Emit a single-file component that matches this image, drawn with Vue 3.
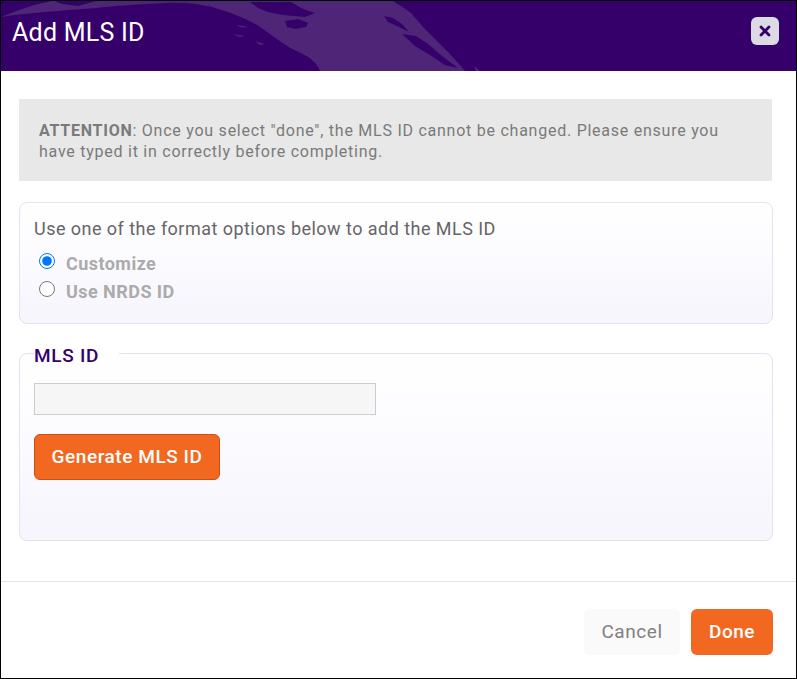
<script setup>
import { ref } from 'vue'
const format = ref('customize')
</script>

<template>
  <div class="modal">
    <header class="head">
      <svg class="globe" viewBox="1 1 795 70" width="795" height="70" aria-hidden="true">
        <path class="land" d="M1 17C14 12 30 5 52 1H55L62 4 78 6 96 1H393L401 6 411 13 424 28 437 41 448 52 458 63 465 71H320C317 63 311 58 301 53 287 47 277 39 263 29 251 20 232 13 212 7 197 3 180 2 165 3 140 4 113 6 96 8 70 10 40 12 15 15Z"/>
        <path class="sea" d="M250 2H291L303 9 315 13 305 17 283 15 268 12 258 8Z"/>
        <path class="sea" d="M285 21 298 19 308 23 306 27 295 29 287 27Z"/>
        <path class="sea" d="M384 16 393 18 402 24 409 32 399 27 388 22Z"/>
        <path class="sea" d="M402 34 416 36 428 44 442 56 458 68 445 65 430 55 415 46Z"/>
        <path class="sea" d="M235 24 255 27 270 36 272 42 258 38 240 32Z"/>
        <path class="land" d="M237 25 244 26 248 28 240 27Z"/>
        <path class="land" d="M232 34 245 36 240 37Z"/>
        <path class="land" d="M255 41 265 44 260 45Z"/>
        <path class="sea" d="M396 1H404L400 4Z"/>
        <path class="land" d="M474 66 480 71H476Z"/>
      </svg>
      <h1 class="title">Add MLS ID</h1>
      <button class="close" type="button" aria-label="Close">
        <svg viewBox="0 0 14 14" width="14" height="14">
          <path d="M3 3 11 11M11 3 3 11" fill="none" stroke="#35006a" stroke-width="2.8" stroke-linecap="round"/>
        </svg>
      </button>
    </header>

    <main class="body">
      <div class="notice">
        <strong>ATTENTION</strong>: Once you select "done", the MLS ID cannot be changed. Please ensure you have typed it in correctly before completing.
      </div>

      <section class="panel formats">
        <p class="lead">Use one of the format options below to add the MLS ID</p>
        <label class="option">
          <input v-model="format" type="radio" name="format" value="customize" />
          <span>Customize</span>
        </label>
        <label class="option">
          <input v-model="format" type="radio" name="format" value="nrds" />
          <span>Use NRDS ID</span>
        </label>
      </section>

      <fieldset class="panel idset">
        <legend>MLS ID</legend>
        <input class="idinput" type="text" disabled />
        <button class="generate" type="button">Generate MLS ID</button>
      </fieldset>
    </main>

    <footer class="foot">
      <button class="cancel" type="button">Cancel</button>
      <button class="done" type="button">Done</button>
    </footer>
  </div>
</template>

<style>
html, body { margin: 0; background: #fff; }
</style>

<style scoped>
.modal {
  box-sizing: border-box;
  width: 797px;
  height: 679px;
  border: 1px solid #000;
  background: #fff;
  font-family: Roboto, "Liberation Sans", sans-serif;
  display: flex;
  flex-direction: column;
  overflow: hidden;
}
.head {
  position: relative;
  flex: none;
  height: 70px;
  background: #35006a;
  display: flex;
  align-items: center;
  justify-content: space-between;
  padding: 0 17px 0 11px;
  overflow: hidden;
}
.globe { position: absolute; left: 0; top: 0; }
.land { fill: #4f2577; }
.sea { fill: #35006a; }
.title {
  position: relative;
  margin: 0 0 6px;
  font-size: 25px;
  font-weight: 400;
  line-height: 30px;
  letter-spacing: 0.25px;
  color: #fff;
}
.close {
  position: relative;
  width: 28px;
  height: 28px;
  padding: 0;
  margin-bottom: 10px;
  border: 0;
  border-radius: 6px;
  background: #dcdae2;
  display: flex;
  align-items: center;
  justify-content: center;
}
.body {
  flex: 1;
  padding: 28px 23px 0 18px;
}
.notice {
  box-sizing: border-box;
  width: 753px;
  height: 82px;
  padding: 21px 32px 0 20px;
  background: #e8e8e8;
  color: #7a7a7a;
  font-size: 16px;
  line-height: 21px;
  letter-spacing: 0.75px;
}
.notice strong { font-weight: 700; }
.panel {
  box-sizing: border-box;
  width: 754px;
  border: 1px solid #e4e1f3;
  border-radius: 8px;
  background: linear-gradient(#fff, #f7f5fd);
}
.formats {
  height: 122px;
  margin: 21px 0 0;
  padding: 15px 14px 0;
}
.lead {
  margin: 0 0 8px;
  font-size: 18px;
  line-height: 22px;
  letter-spacing: 0.46px;
  color: #666;
}
.option {
  display: flex;
  align-items: center;
  height: 28px;
  font-size: 18px;
  font-weight: 700;
  letter-spacing: 0.45px;
  color: #ababab;
}
.option span { position: relative; top: 1px; }
.option input {
  width: 16px;
  height: 16px;
  margin: 0 11px 3px 5px;
}
.idset {
  height: 202px;
  margin: 15px 0 0;
  padding: 16px 14px 0;
  min-width: 0;
}
legend {
  padding: 6px 20px 0 0;
  font-size: 19px;
  font-weight: 500;
  line-height: 22px;
  letter-spacing: 0.7px;
  color: #35006a;
}
.idinput {
  display: block;
  box-sizing: border-box;
  width: 342px;
  height: 32px;
  border: 1px solid #ccc;
  background: #f6f6f6;
}
.generate {
  display: block;
  box-sizing: border-box;
  width: 186px;
  height: 46px;
  margin-top: 19px;
  padding: 0 0 2px;
  border: 1px solid #c94f12;
  border-radius: 6px;
  background: #f36821;
  color: #fff;
  font: 500 19px Roboto, sans-serif;
  letter-spacing: 0.55px;
}
.foot {
  flex: none;
  box-sizing: border-box;
  height: 97px;
  border-top: 1px solid #e4e4e4;
  padding: 27px 23px 0 0;
  display: flex;
  justify-content: flex-end;
  align-items: flex-start;
  gap: 11px;
}
.foot button {
  height: 46px;
  border: 0;
  border-radius: 6px;
  padding: 0 0 1px;
  font-family: Roboto, sans-serif;
  font-size: 19px;
  letter-spacing: 0.55px;
}
.cancel {
  width: 96px;
  background: #fafafa;
  color: #808080;
  font-weight: 400;
}
.done {
  width: 82px;
  background: #f36821;
  color: #fff;
  font-weight: 500;
}
</style>
